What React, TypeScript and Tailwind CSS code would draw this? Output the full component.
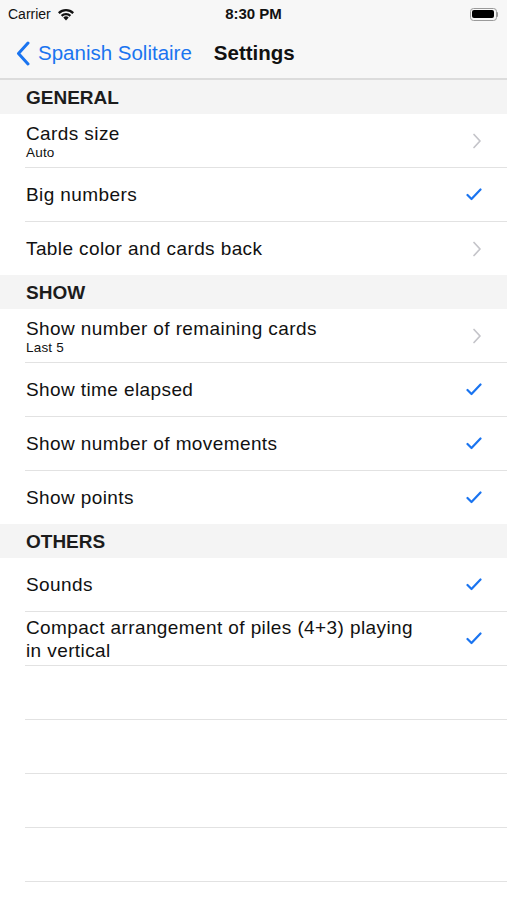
import React from "react";

type Row = {
  title: string;
  subtitle?: string;
  accessory: "chevron" | "check";
};

type Section = {
  header: string;
  rows: Row[];
};

const sections: Section[] = [
  {
    header: "GENERAL",
    rows: [
      { title: "Cards size", subtitle: "Auto", accessory: "chevron" },
      { title: "Big numbers", accessory: "check" },
      { title: "Table color and cards back", accessory: "chevron" },
    ],
  },
  {
    header: "SHOW",
    rows: [
      { title: "Show number of remaining cards", subtitle: "Last 5", accessory: "chevron" },
      { title: "Show time elapsed", accessory: "check" },
      { title: "Show number of movements", accessory: "check" },
      { title: "Show points", accessory: "check" },
    ],
  },
  {
    header: "OTHERS",
    rows: [
      { title: "Sounds", accessory: "check" },
      { title: "Compact arrangement of piles (4+3) playing in vertical", accessory: "check" },
    ],
  },
];

const Chevron = () => (
  <svg width="10" height="16" viewBox="0 0 10 16" fill="none" className="translate-x-[3px]">
    <path d="M2 1.5L8 8L2 14.5" stroke="#c4c4c9" strokeWidth="1.7" strokeLinecap="round" strokeLinejoin="round" />
  </svg>
);

const Check = () => (
  <svg width="16" height="13" viewBox="0 0 16 13" fill="none">
    <path d="M1.5 7L5.5 11L14.5 1.5" stroke="#1a74f0" strokeWidth="2.2" strokeLinecap="round" strokeLinejoin="round" />
  </svg>
);

const Wifi = () => (
  <svg width="18" height="13" viewBox="0 0 18 13">
    <path d="M9 12.5L6.3 9.5a4 4 0 0 1 5.4 0z" fill="#111" />
    <path d="M3.8 7a7.5 7.5 0 0 1 10.4 0l-1.6 1.7a5.2 5.2 0 0 0-7.2 0z" fill="#111" />
    <path d="M1 4.2a11.5 11.5 0 0 1 16 0l-1.6 1.7a9.2 9.2 0 0 0-12.8 0z" fill="#111" />
  </svg>
);

const Battery = () => (
  <div className="flex items-center">
    <div className="w-[27px] h-[13px] rounded-[3.5px] border border-[#9a9a9a] p-[1.5px]">
      <div className="w-full h-full rounded-[2px] bg-black" />
    </div>
    <div className="w-[1.5px] h-[5px] bg-[#9a9a9a] rounded-r-sm" />
  </div>
);

const SettingsRow: React.FC<{ row: Row }> = ({ row }) => (
  <div className="flex items-center h-[53px] pl-[26px] pr-[25px]">
    <div className="flex-1 min-w-0 pr-[40px]">
      <p className="text-[19px] leading-[23px] tracking-[0.4px] text-[#111]">{row.title}</p>
      {row.subtitle && (
        <p className="text-[13.5px] leading-[15px] tracking-[0.2px] text-[#111]">{row.subtitle}</p>
      )}
    </div>
    <div className="w-[16px] flex justify-center">
      {row.accessory === "chevron" ? <Chevron /> : <Check />}
    </div>
  </div>
);

export default function App() {
  return (
    <div className="w-[507px] h-[900px] overflow-hidden bg-white" style={{ fontFamily: '"Liberation Sans", Arial, sans-serif' }}>
      <div className="bg-[#f7f7f7] border-b-2 border-[#dcdcdc]">
        <div className="relative flex items-center justify-between h-[28px] px-[8px]">
          <div className="flex items-center gap-[6px] text-[14px] text-[#111]">
            <span>Carrier</span>
            <Wifi />
          </div>
          <span className="absolute left-1/2 -translate-x-1/2 text-[15px] font-bold text-[#111]">8:30 PM</span>
          <div className="pr-[1px]">
            <Battery />
          </div>
        </div>
        <div className="flex items-center h-[50px] pl-[16px]">
          <svg width="14" height="25" viewBox="0 0 14 25" fill="none" className="mr-[8px]">
            <path d="M12 2L2.5 12.5L12 23" stroke="#1a74f0" strokeWidth="3" strokeLinecap="round" strokeLinejoin="round" />
          </svg>
          <span className="text-[20.5px] text-[#1a74f0]">Spanish Solitaire</span>
          <span className="ml-[22px] text-[20.5px] font-bold text-[#111]">Settings</span>
        </div>
      </div>

      {sections.map(section => (
        <div key={section.header}>
          <div className="h-[34px] bg-[#f4f4f4] flex items-center pl-[26px] pt-[2px]">
            <span className="text-[19px] font-bold text-[#1c1c1c]">{section.header}</span>
          </div>
          {section.rows.map((row, i) => (
            <div key={row.title}>
              <SettingsRow row={row} />
              {(i < section.rows.length - 1 || section.header === "OTHERS") && (
                <div className="ml-[25px] h-px bg-[#e2e2e2]" />
              )}
            </div>
          ))}
        </div>
      ))}

      {[0, 1, 2, 3].map(i => (
        <div key={i}>
          <div className="h-[53px]" />
          <div className="ml-[25px] h-px bg-[#e2e2e2]" />
        </div>
      ))}
    </div>
  );
}
